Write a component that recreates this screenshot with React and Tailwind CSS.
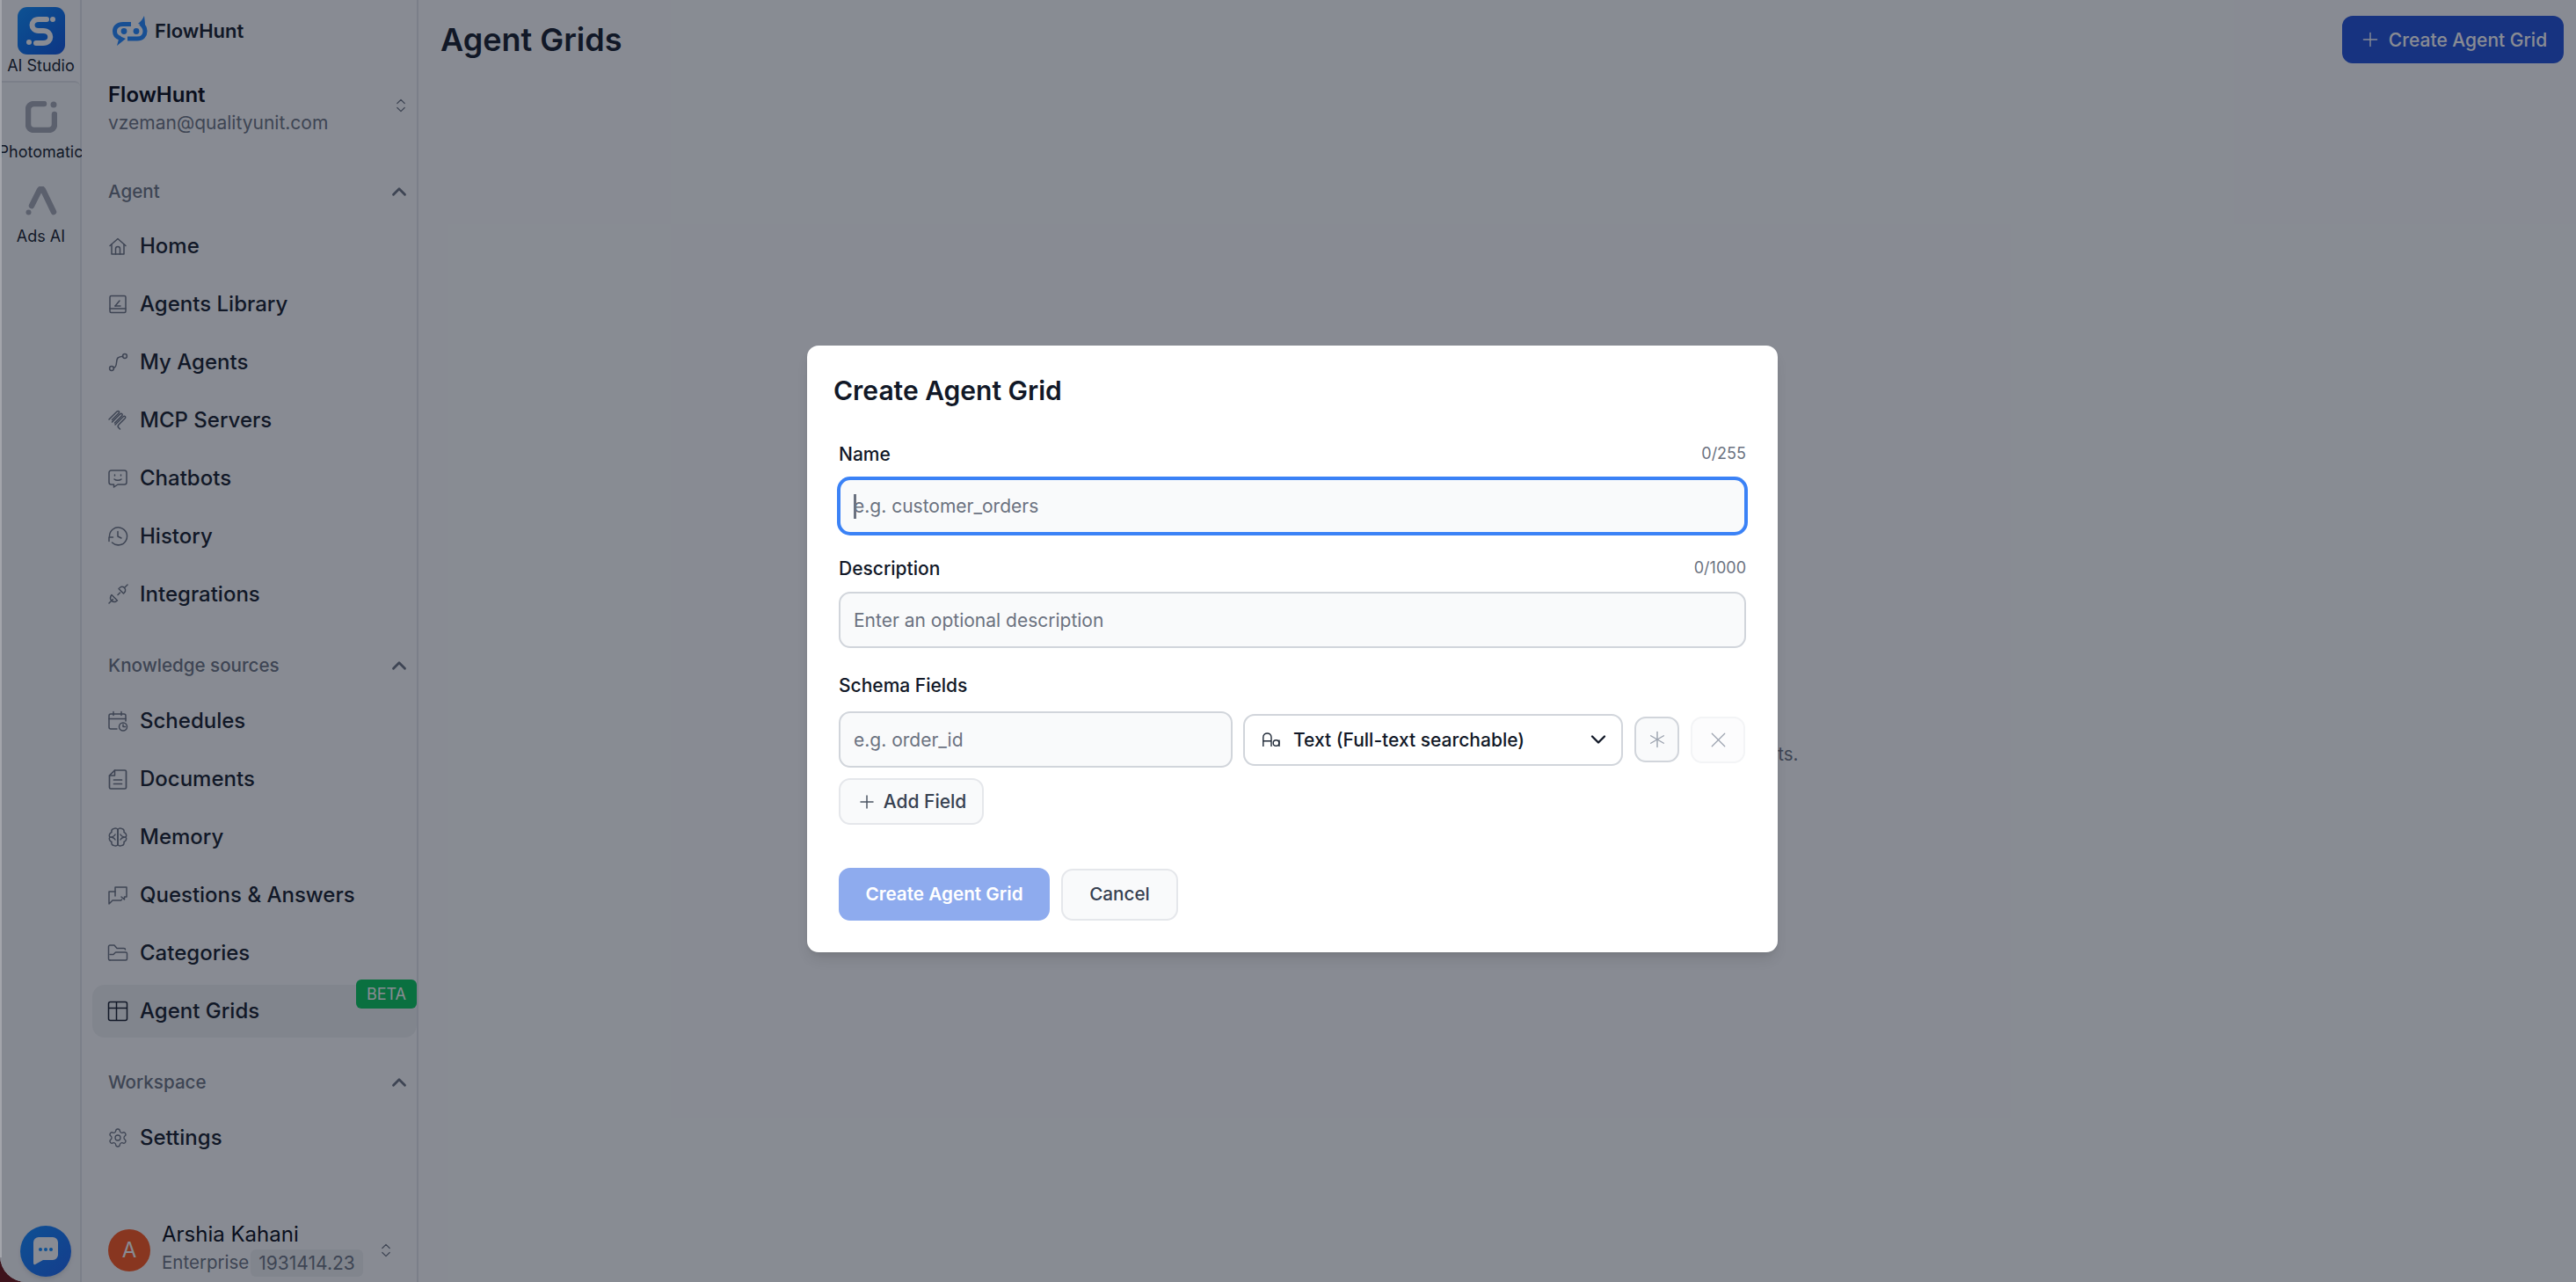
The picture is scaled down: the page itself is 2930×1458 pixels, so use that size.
import React from "react";
import { Settings, ChevronUp, ChevronDown, ChevronsUpDown, Plus, Asterisk, X } from "lucide-react";

const I = ({ children }) => (
  <svg width="24" height="24" viewBox="0 0 24 24" fill="none" stroke="#6b7280" strokeWidth="1.5" strokeLinecap="round" strokeLinejoin="round" className="shrink-0">
    {children}
  </svg>
);

const HomeI = () => <I><path d="M3 11.500 12 3.500l9 8" /><path d="M5 10v11h14V10" /><path d="M9.500 21v-6a2.500 2.500 0 0 1 5 0v6" /></I>;
const BookI = () => <I><rect x="3" y="2.500" width="18" height="19" rx="1.500" /><path d="M3 17h18" /><path d="m9 14 5-6" /><path d="M9 14h6" /></I>;
const RouteI = () => <I><circle cx="5" cy="19" r="2.400" /><circle cx="20" cy="5" r="2.400" /><path d="M7.200 18.400c5-.6 2-9 5-11.500 1.400-1.200 3.500-1.500 5.500-1.700" /></I>;
const McpI = () => <I><path d="m2 11 9-9c1.800-1.500 3.500.5 2 2l-7.500 7.500" /><path d="m5.500 14 9-9c1.800-1.500 3.700.3 2 2l-8 8" /><path d="m9 17 9-9c2-1.700 3.800.4 2 2l-7 7c-1 1-1 2.500 0 3.500l1.500 1.500" /></I>;
const ChatI = () => <I><path d="M4.500 3h15A2.500 2.500 0 0 1 22 5.500v11a2.500 2.500 0 0 1-2.500 2.500H12l-4.500 3v-3h-3A2.500 2.500 0 0 1 2 16.500v-11A2.500 2.500 0 0 1 4.500 3Z" /><path d="M8.500 8v1M15.500 8v1" /><path d="M8 13c2 1.800 6 1.800 8 0" /></I>;
const HistoryI = () => <I><path d="M2.500 12a10 10 0 1 1 3 7" /><path d="M2 17.500V13h4.500" /><path d="M12 6.500V12l4 2" /></I>;
const PlugI = () => <I><path d="m2 22 4.500-4.500" /><path d="m5 12.500 6.500 6.500-1.500 1a4.500 4.500 0 0 1-6-6Z" /><path d="m12 12.500 2.500-2.500" /><path d="M13 5.500 18.500 11l2-2.500a4 4 0 0 0-5-5Z" /><path d="M20 4l3-3" /></I>;
const CalI = () => <I><path d="M11 21H4a2 2 0 0 1-2-2V6a2 2 0 0 1 2-2h15a2 2 0 0 1 2 2v6" /><path d="M7 1.500v4M16 1.500v4M2 9.500h19" /><circle cx="18" cy="18.500" r="4.500" /><path d="M18 16v2.500h2.500" /></I>;
const DocI = () => <I><path d="M8.500 2H20a1.500 1.500 0 0 1 1.500 1.500v18A1.500 1.500 0 0 1 20 23H4a1.500 1.500 0 0 1-1.500-1.500V8Z" strokeWidth="1.700" /><path d="M8.500 2v6H2.500" /><path d="M7.500 13h9M7.500 17.500h9" strokeWidth="1.700" /></I>;
const BrainI = () => (
  <I>
    <path d="M12 4C12 2 9 1.500 7.500 2.500 5.500 2.500 4.500 4.500 5 6.500 2.500 7.500 1.500 10.500 3 12 1.500 13.500 2.500 16.500 5 17.500 4.500 19.500 5.500 21.500 7.500 21.500 9 22.500 12 22 12 20Z" />
    <path d="M12 4C12 2 15 1.500 16.500 2.500 18.500 2.500 19.500 4.500 19 6.500 21.500 7.500 22.500 10.500 21 12 22.500 13.500 21.500 16.500 19 17.500 19.500 19.500 18.500 21.500 16.500 21.500 15 22.500 12 22 12 20Z" />
    <path d="M3 12c3 0 5-1 6-3M21 12c-3 0-5-1-6-3M3 12c3 0 5 1 6 3M21 12c-3 0-5 1-6 3" />
  </I>
);
const QaI = () => <I><path d="M9 13V3h13v11h-2.500v3l-3.500-3" /><path d="M9 8H2v14l4-4h9.500a2 2 0 0 0 1-1" /></I>;
const FolderI = () => <I><path d="M3 20a1.500 1.500 0 0 1-1.500-1.500v-14A1.500 1.500 0 0 1 3 3h5l3 3.500h8a1.500 1.500 0 0 1 1.500 1.500" /><path d="M3 20h18a1.500 1.500 0 0 0 1.500-1.500v-6a1.500 1.500 0 0 0-1.500-1.500H9.500l-2.500 2.500H3" /></I>;
const GridI = () => <svg width="24" height="24" viewBox="0 0 24 24" fill="none" stroke="#111827" strokeWidth="1.500" className="shrink-0"><rect x="1.500" y="1.500" width="21" height="21" rx="2" /><path d="M1.500 8.500h21M10.500 1.500v21" /></svg>;
const GearI = () => <Settings size={24} strokeWidth={1.300} color="#6b7280" className="shrink-0" />;

const Nav = ({ icon, label }) => (
  <div className="flex items-center h-[66px] pl-[17px] gap-[13px]">
    {icon}
    <span className="text-[24px] font-medium text-[#111827] leading-none">{label}</span>
  </div>
);

const Head = ({ label }) => (
  <div className="flex items-center justify-between pl-[18px] -mr-[5px] h-[40px]">
    <span className="text-[20.600px] font-medium text-[#6b7280] leading-none">{label}</span>
    <ChevronUp size={26} strokeWidth={2.600} color="#6b7280" />
  </div>
);

const Logo = () => (
  <svg width="40" height="35" viewBox="0 0 40 35" fill="none" className="shrink-0">
    <path d="M21 9.500H12C5.500 9.500 2.500 13 2.500 17.500 2.500 21.500 5 24.500 9 25.500" stroke="#1e86ff" strokeWidth="5" />
    <path d="M5 34 8 23l7 3Z" fill="#1e86ff" />
    <path d="M17 26H28C34 26 37 22 37 17.500 37 13 34.500 10.500 32 8.500" stroke="#1e86ff" strokeWidth="5" />
    <path d="M36 0C36.500 4 37 7 37 11L29 9C32 6.500 34.500 3.500 36 0Z" fill="#1e86ff" />
    <circle cx="13" cy="17.500" r="3.400" fill="#1e86ff" />
    <circle cx="27" cy="17.500" r="3.400" fill="#1e86ff" />
  </svg>
);

const SLogo = () => (
  <div className="w-[54px] h-[54px] rounded-[11px] bg-gradient-to-br from-[#0b8cff] to-[#0c52e0] flex items-center justify-center">
    <svg width="54" height="54" viewBox="0 0 54 54" fill="none">
      <path d="M33 14H24C14 14 14 27 24 27H29C40 27 40 41 29 41H21" stroke="#ffffff" strokeWidth="6" strokeLinecap="round" />
      <circle cx="40" cy="14" r="3" fill="#fff" />
      <circle cx="13" cy="40" r="3" fill="#fff" />
    </svg>
  </div>
);

const PhotoLogo = () => (
  <svg width="36" height="36" viewBox="0 0 36 36" fill="none">
    <path d="M21 3H10C5.500 3 3 5.500 3 10V26C3 30.500 5.500 33 10 33H26C30.500 33 33 30.500 33 26V15" stroke="#a5a9b3" strokeWidth="6.500" strokeLinecap="round" />
    <circle cx="32" cy="4" r="3.500" fill="#a5a9b3" />
  </svg>
);

const AdsLogo = () => (
  <svg width="36" height="34" viewBox="0 0 36 34" fill="none">
    <path d="M7 22 16 4Q18 1 20 4L32 29" stroke="#a5a9b3" strokeWidth="6.500" strokeLinecap="round" />
    <circle cx="3.500" cy="29.500" r="3" fill="#a5a9b3" />
  </svg>
);

const AaIcon = () => (
  <svg width="20" height="16" viewBox="0 0 20 16" fill="none" stroke="#1f2937" strokeWidth="1.400" className="shrink-0">
    <path d="M.8 16V5.500C.8-.6 10-.6 10 5.500V16M.8 9.800H10" />
    <circle cx="15.500" cy="12" r="3.300" />
    <path d="M19 8.500V16" />
  </svg>
);

const Input = ({ placeholder, className, caret }) => (
  <div className={"flex items-center bg-[#f9fafb] rounded-[13px] pl-[15px] text-[21px] text-[#6b7280] leading-none " + className}>
    {caret && <span className="w-[3px] h-[28px] bg-[#6b7280] -mr-[3px] shrink-0" />}
    <span>{placeholder}</span>
  </div>
);

const FieldHead = ({ label, count }) => (
  <div className="flex items-center justify-between h-[24px]">
    <span className="text-[21px] font-medium text-[#111827] leading-none">{label}</span>
    {count && <span className="text-[18px] text-[#6b7280] leading-none">{count}</span>}
  </div>
);

export default function App() {
  return (
    <div className="relative w-[2930px] h-[1458px] overflow-hidden bg-[#6a0f10] font-['Inter',sans-serif]">
      <div className="flex h-full bg-white rounded-bl-[30px] overflow-hidden">
        <aside className="w-[93px] shrink-0 flex flex-col border-r-2 border-[#e5e7eb] bg-white relative">
          <div className="flex flex-col items-center pt-[8px] h-[92px] ml-[2px]">
            <SLogo />
            <span className="text-[18px] text-[#111827] leading-none mt-[4px] whitespace-nowrap">AI Studio</span>
          </div>
          <div className="flex-1 rounded-tr-[6px] border-t-2 border-[#e5e7eb] bg-[#f9fafb] ml-[2px] flex flex-col items-center">
            <div className="mt-[21px]"><PhotoLogo /></div>
            <span className="text-[18px] text-[#111827] leading-none mt-[13px] whitespace-nowrap">Photomatic</span>
            <div className="mt-[30px]"><AdsLogo /></div>
            <span className="text-[18px] text-[#111827] leading-none mt-[14px] whitespace-nowrap">Ads AI</span>
          </div>
          <div className="absolute left-[23px] bottom-[6px] w-[58px] h-[58px] rounded-full bg-gradient-to-br from-[#0a88ff] to-[#1762f0] flex items-center justify-center shadow-md">
            <svg width="28" height="32" viewBox="0 0 28 32" fill="#ffffff"><path d="M6 0h16a6 6 0 0 1 6 6v14a6 6 0 0 1-6 6H11l-9 5q-2 1-2-2V6a6 6 0 0 1 6-6Z" /><circle cx="8" cy="14" r="2" fill="#0a88ff" /><circle cx="14" cy="14" r="2" fill="#0a88ff" /><circle cx="20" cy="14" r="2" fill="#0a88ff" /></svg>
          </div>
        </aside>

        <aside className="w-[383px] shrink-0 flex flex-col border-r-2 border-[#e5e7eb] bg-white relative">
          <div className="flex items-center h-[70px] pl-[35px] gap-[8px]">
            <Logo />
            <span className="text-[22px] font-semibold text-[#111827] leading-none">FlowHunt</span>
          </div>
          <div className="flex items-center justify-between pl-[30px] pr-[8px] h-[66px] mt-[20px]">
            <div className="flex flex-col gap-[9px]">
              <span className="text-[24px] font-semibold text-[#030712] leading-none">FlowHunt</span>
              <span className="text-[21px] text-[#6b7280] leading-none">vzeman@qualityunit.com</span>
            </div>
            <ChevronsUpDown size={20} strokeWidth={1.500} color="#6b7280" className="-mt-[6px]" />
          </div>
          <div className="mt-[42px] px-[12px]">
            <Head label="Agent" />
            <div className="mt-[9px]">
              <Nav icon={<HomeI />} label="Home" />
              <Nav icon={<BookI />} label="Agents Library" />
              <Nav icon={<RouteI />} label="My Agents" />
              <Nav icon={<McpI />} label="MCP Servers" />
              <Nav icon={<ChatI />} label="Chatbots" />
              <Nav icon={<HistoryI />} label="History" />
              <Nav icon={<PlugI />} label="Integrations" />
            </div>
            <div className="mt-[28px]"><Head label="Knowledge sources" /></div>
            <div className="mt-[10px]">
              <Nav icon={<CalI />} label="Schedules" />
              <Nav icon={<DocI />} label="Documents" />
              <Nav icon={<BrainI />} label="Memory" />
              <Nav icon={<QaI />} label="Questions & Answers" />
              <Nav icon={<FolderI />} label="Categories" />
              <div className="flex items-center h-[60px] my-[3px] pl-[17px] gap-[13px] bg-[#f1f2f3] rounded-[14px] -mr-[12px]">
                <GridI />
                <span className="text-[24px] font-medium text-[#111827] leading-none">Agent Grids</span>
              </div>
            </div>
            <div className="mt-[31px]"><Head label="Workspace" /></div>
            <div className="mt-[10px]">
              <Nav icon={<GearI />} label="Settings" />
            </div>
          </div>
          <div className="absolute right-[0px] top-[1114px] w-[69px] h-[33px] rounded-[6px] bg-[#03c859] text-[18px] text-white flex items-center justify-center leading-none">BETA</div>
          <div className="absolute left-[30px] right-0 top-[1392px] flex items-center">
            <div className="w-[48px] h-[48px] rounded-full bg-[#ff5419] text-white text-[24px] flex items-center justify-center">A</div>
            <div className="ml-[13px] flex flex-col w-[228px]">
              <span className="text-[24px] text-[#030712] leading-none">Arshia Kahani</span>
              <div className="flex items-center mt-[5px]">
                <span className="text-[20.500px] text-[#6b7280] leading-none">Enterprise</span>
                <span className="text-[21px] text-[#6b7280] leading-none bg-[#f1f2f3] rounded-[6px] ml-[2px] px-[9px] py-[5px]">1931414.23</span>
              </div>
            </div>
            <ChevronsUpDown size={20} strokeWidth={1.500} color="#6b7280" className="ml-[17px]" />
          </div>
        </aside>

        <main className="flex-1 relative flex flex-col bg-white">
          <div className="flex items-center justify-between pl-[25px] pr-[14px] h-[90px]">
            <h1 className="text-[36px] font-semibold text-[#111827] leading-none">Agent Grids</h1>
            <button className="flex items-center justify-center gap-[8px] w-[252px] h-[54px] rounded-[12px] bg-[#1d4ed8] text-white text-[21px] font-medium leading-none">
              <Plus size={26} strokeWidth={1.300} />
              Create Agent Grid
            </button>
          </div>
          <div className="flex-1 flex justify-center pt-[758px]">
            <p className="text-[20.400px] text-[#6b7280] leading-none whitespace-nowrap">Create your first agent grid to organize structured data for your agents.</p>
          </div>
        </main>
      </div>

      <div className="absolute inset-0 bg-[#111827]/50 flex items-start justify-center pt-[393px] pl-[10px]">
        <div className="absolute left-0 top-0 w-[2px] h-[1430px] bg-[#a3a5ab]" />
        <div className="w-[1104px] h-[690px] bg-white rounded-[13px] shadow-lg px-[36px] pt-[29px] flex flex-col">
          <h2 className="text-[30px] font-semibold text-[#111827] leading-none -ml-[6px] h-[44px] flex items-center">Create Agent Grid</h2>
          <div className="mt-[38px]"><FieldHead label="Name" count="0/255" /></div>
          <Input placeholder="e.g. customer_orders" caret className="mt-[16px] h-[63px] w-[1032px] border-2 border-[#3b82f6] ring-2 ring-[#3b82f6]" />
          <div className="mt-[27px]"><FieldHead label="Description" count="0/1000" /></div>
          <Input placeholder="Enter an optional description" className="mt-[15px] h-[64px] w-[1032px] border-2 border-[#d1d5db]" />
          <div className="mt-[30px]"><FieldHead label="Schema Fields" /></div>
          <div className="flex items-center mt-[18px]">
            <Input placeholder="e.g. order_id" className="h-[64px] w-[448px] border-2 border-[#d1d5db]" />
            <div className="ml-[12px] w-[432px] h-[59px] border-2 border-[#d1d5db] rounded-[13px] flex items-center pl-[20px] pr-[12px] bg-white">
              <AaIcon />
              <span className="text-[21px] font-medium text-[#111827] leading-none ml-[15px]">Text (Full-text searchable)</span>
              <ChevronDown size={28} strokeWidth={2} color="#111827" className="ml-auto" />
            </div>
            <div className="ml-[13px] w-[51px] h-[52px] border-2 border-[#d1d5db] rounded-[13px] bg-[#f9fafb] flex items-center justify-center shrink-0">
              <Asterisk size={34} strokeWidth={1} color="#9ca3af" className="shrink-0" />
            </div>
            <div className="ml-[13px] w-[62px] h-[53px] border-2 border-[#f3f4f6] rounded-[13px] bg-[#fcfcfd] flex items-center justify-center shrink-0">
              <X size={29} strokeWidth={1} color="#9ca3af" className="shrink-0" />
            </div>
          </div>
          <button className="mt-[12px] w-[165px] h-[53px] rounded-[13px] border-2 border-[#e5e7eb] bg-[#f9fafb] flex items-center justify-center gap-[7px] text-[21px] font-medium text-[#374151] leading-none">
            <Plus size={24} strokeWidth={1.500} color="#4b5563" />
            Add Field
          </button>
          <div className="flex items-center mt-[49px]">
            <button className="w-[240px] h-[60px] rounded-[13px] bg-[#8eabee] text-white text-[20.700px] font-semibold leading-none">Create Agent Grid</button>
            <button className="ml-[13px] w-[133px] h-[59px] rounded-[13px] border-2 border-[#e5e7eb] bg-[#f9fafb] text-[20.700px] font-medium text-[#374151] leading-none">Cancel</button>
          </div>
        </div>
      </div>
    </div>
  );
}
